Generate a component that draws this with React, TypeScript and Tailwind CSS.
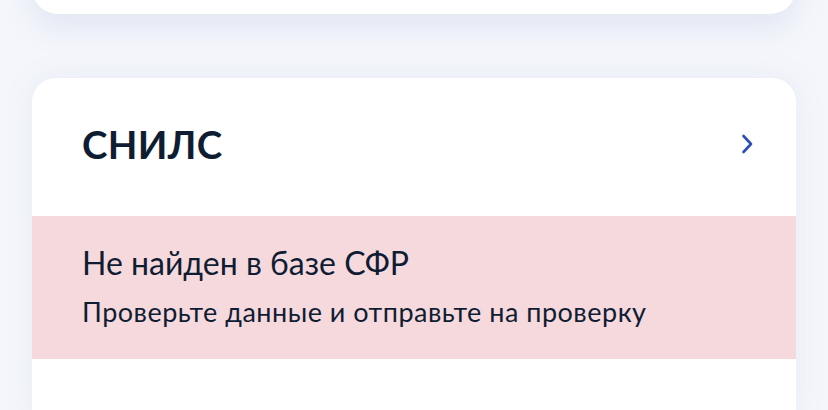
import React from 'react';

const ChevronRight: React.FC = () => (
  <svg width="14" height="22" viewBox="0 0 14 22" fill="none">
    <path d="M3.5 3l7.5 8-7.5 8" stroke="#2b4fb5" strokeWidth="2.6" strokeLinecap="round" strokeLinejoin="round" />
  </svg>
);

export default function App() {
  return (
    <div className="w-[828px] h-[410px] overflow-hidden bg-[#f4f6fb] font-['Lato',sans-serif] text-[#0f1d33]">
      <div className="mx-[32px] -mt-[40px] h-[54px] rounded-b-[26px] bg-white shadow-[0_14px_30px_rgba(120,140,190,0.14)]" />
      <div className="mx-[32px] mt-[64px] rounded-t-[24px] bg-white shadow-[0_0_30px_rgba(120,140,190,0.10)] overflow-hidden">
        <div className="h-[138px] flex items-center justify-between pl-[50px] pr-[42px] pb-[6px]">
          <h2 className="text-[38.5px] font-bold leading-none tracking-[0.3px]">СНИЛС</h2>
          <ChevronRight />
        </div>
        <div className="h-[143px] bg-[#f6d9dd] pl-[50px] pt-[27px]">
          <div className="text-[32px] leading-[40px]">Не найден в базе СФР</div>
          <div className="text-[27px] leading-[34px] mt-[12px] tracking-[0.5px]">Проверьте данные и отправьте на проверку</div>
        </div>
        <div className="h-[60px]" />
      </div>
    </div>
  );
}
